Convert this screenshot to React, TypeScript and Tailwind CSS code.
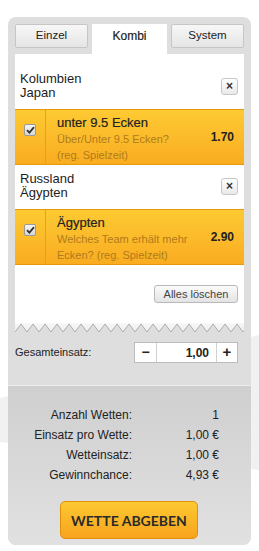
import React from 'react'

const font = { fontFamily: '"Liberation Sans", Arial, sans-serif' }

type Bet = {
  teams: [string, string]
  pick: string
  question: string
  odds: string
}

const bets: Bet[] = [
  {
    teams: ['Kolumbien', 'Japan'],
    pick: 'unter 9.5 Ecken',
    question: 'Über/Unter 9.5 Ecken? (reg. Spielzeit)',
    odds: '1.70',
  },
  {
    teams: ['Russland', 'Ägypten'],
    pick: 'Ägypten',
    question: 'Welches Team erhält mehr Ecken? (reg. Spielzeit)',
    odds: '2.90',
  },
]

const stats = [
  { label: 'Anzahl Wetten:', value: '1' },
  { label: 'Einsatz pro Wette:', value: '1,00 €' },
  { label: 'Wetteinsatz:', value: '1,00 €' },
  { label: 'Gewinnchance:', value: '4,93 €' },
]

const Zigzag = () => {
  const pts: string[] = []
  for (let x = 0; x <= 232; x += 12) {
    pts.push(`${x},9`)
    pts.push(`${x + 6},1`)
  }
  return (
    <svg width="229" height="10" viewBox="0 0 229 10" className="block">
      <defs>
        <linearGradient id="zz" x1="0" y1="0" x2="0" y2="1">
          <stop offset="0" stopColor="#f7f7f7" />
          <stop offset="1" stopColor="#eeeeee" />
        </linearGradient>
      </defs>
      <polygon points={`0,0 ${pts.join(' ')} 232,0`} fill="url(#zz)" />
      <polyline points={pts.join(' ')} fill="none" stroke="#adadad" strokeWidth="1" />
    </svg>
  )
}

const Checkbox = () => (
  <div className="w-[12px] h-[12px] rounded-[2px] border border-[#9a9a9a] bg-gradient-to-b from-[#f6f6f6] to-[#d6d6d6] flex items-center justify-center">
    <svg width="9" height="8" viewBox="0 0 9 8">
      <path d="M1 4.2 L3.4 6.6 L8 1.2" fill="none" stroke="#333" strokeWidth="1.8" />
    </svg>
  </div>
)

const CloseButton = () => (
  <div className="w-[17px] h-[17px] rounded-[3px] border border-[#c6c6c6] bg-gradient-to-b from-white to-[#e9e9e9] flex items-center justify-center text-[12px] font-bold leading-none text-[#333]">
    ×
  </div>
)

const BetItem: React.FC<{ bet: Bet }> = ({ bet }) => (
  <div>
    <div className="flex items-center justify-between pl-[5px] pr-[6px] pt-[7px] pb-[9px]">
      <div className="text-[13px] leading-[14px] text-[#1c1c1c]">
        <div>{bet.teams[0]}</div>
        <div>{bet.teams[1]}</div>
      </div>
      <CloseButton />
    </div>
    <div className="flex border-y border-[#e59a0c] bg-gradient-to-b from-[#fdca33] to-[#f9ac20]">
      <div className="w-[31px] shrink-0 border-r border-[#e3a11c] flex justify-center pt-[14px]">
        <Checkbox />
      </div>
      <div className="flex-1 pl-[11px] pt-[5px] pb-[1px]">
        <div className="text-[13px] leading-[16px] text-[#222] [-webkit-text-stroke:0.2px_#222]">
          {bet.pick}
        </div>
        <div className="text-[11px] leading-[16px] text-[#b07b1c]">{bet.question}</div>
      </div>
      <div className="w-[50px] shrink-0 flex items-center justify-end pr-[10px] text-[12px] font-bold text-[#222]">
        {bet.odds}
      </div>
    </div>
  </div>
)

export default function App() {
  return (
    <div className="relative w-[259px] h-[551px] bg-white overflow-hidden pt-[17px] pl-[8px]" style={font}>
      <div className="absolute inset-0 bg-[#f1f1f1] [clip-path:polygon(100%_335px,100%_470px,0_442px,0_398px)]" />
      <div className="relative w-[243px] rounded-[8px] bg-[#dedede] overflow-hidden">
        <div className="px-[7px] pt-[7px]">
          <div className="flex gap-[4px] h-[30px] items-start text-[11.5px] text-[#222]">
            <div className="w-[73px] h-[24px] border border-[#c6c6c6] rounded-[2px] bg-gradient-to-b from-[#f7f7f7] to-[#e5e5e5] flex items-center justify-center">
              Einzel
            </div>
            <div className="w-[75px] h-[30px] bg-white">
              <div className="h-[24px] flex items-center justify-center text-[12px] [-webkit-text-stroke:0.2px_#222]">Kombi</div>
            </div>
            <div className="w-[73px] h-[24px] border border-[#c6c6c6] rounded-[2px] bg-gradient-to-b from-[#f7f7f7] to-[#e5e5e5] flex items-center justify-center">
              System
            </div>
          </div>

          <div className="bg-white pt-[11px]">
            {bets.map((bet, index) => (
              <BetItem key={`bet-${index}`} bet={bet} />
            ))}
            <div className="flex justify-end pr-[6px] pt-[20px] pb-[20px]">
              <div className="w-[84px] h-[18px] rounded-[3px] border border-[#b9b9b9] bg-gradient-to-b from-[#fbfbfb] to-[#e3e3e3] flex items-center justify-center text-[11px] text-[#444]">
                Alles löschen
              </div>
            </div>
          </div>
          <Zigzag />

          <div className="flex items-center justify-between pr-[6px] mt-[9px] pb-[22px]">
            <span className="text-[11px] text-[#222]">Gesamteinsatz:</span>
            <div className="flex h-[21px] border border-[#bcbcbc] bg-white text-[#222]">
              <div className="w-[21px] flex items-center justify-center text-[14px] font-bold">−</div>
              <div className="w-[61px] border-x border-[#d0d0d0] flex items-center justify-end pr-[7px] text-[12px] font-bold">
                1,00
              </div>
              <div className="w-[20px] flex items-center justify-center text-[15px] font-bold">+</div>
            </div>
          </div>
        </div>

        <div className="border-t border-[#ececec] bg-gradient-to-b from-[#cfcfcf] to-[#e1e1e1] pt-[19px] pb-[6px]">
          <div className="grid grid-cols-[124px_87px] text-[12px] leading-[20px] text-[#222]">
            {stats.map((row, index) => (
              <React.Fragment key={`stat-${index}`}>
                <span className="text-right">{row.label}</span>
                <span className="text-right">{row.value}</span>
              </React.Fragment>
            ))}
          </div>
          <div
            className="ml-[52px] mt-[16px] w-[138px] h-[38px] rounded-[5px] border border-[#e0900b] bg-gradient-to-b from-[#fcc931] to-[#f8a31c] flex items-center justify-center text-[14px] font-bold text-[#2b2b2b]"
            style={{ fontFamily: 'Lato, "Liberation Sans", sans-serif' }}
          >
            WETTE ABGEBEN
          </div>
        </div>
      </div>
    </div>
  )
}
